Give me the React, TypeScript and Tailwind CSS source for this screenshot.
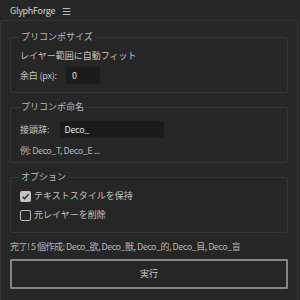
import React from "react";

const font = { fontFamily: '"Noto Sans CJK JP", "Noto Sans", sans-serif' };

function Check({ checked }: { checked: boolean }) {
  return checked ? (
    <span className="flex h-[11px] w-[11px] items-center justify-center rounded-[2px] bg-[#c4c4c4]">
      <svg width="9" height="9" viewBox="0 0 10 10">
        <path d="M1.8 5.2 L4 7.4 L8.3 2.4" fill="none" stroke="#2a2a2a" strokeWidth="1.6" />
      </svg>
    </span>
  ) : (
    <span className="h-[11px] w-[11px] rounded-[2px] border-[1.5px] border-[#b8b8b8]" />
  );
}

export default function App() {
  return (
    <div className="h-[300px] w-[300px] overflow-hidden bg-[#262626] text-[9px] leading-[12px] text-[#c4c4c4]" style={font}>
      <div className="flex h-[20px] items-center gap-[7px] pl-[10px] pt-[2px] text-[#d2d2d2]">
        <span className="tracking-[-0.3px]">GlyphForge</span>
        <span className="text-[10px] leading-none text-[#bbb]">☰</span>
      </div>
      <div className="h-[300px] w-[298px] rounded-[2px] border border-[#343434] px-[9px] pt-[10px]">
        <fieldset className="rounded-[2px] border border-[#353535] px-[9px] pb-[8px]">
          <legend className="px-[1px] text-[#bdbdbd]">プリコンポサイズ</legend>
          <div className="mt-[7px]">レイヤー範囲に自動フィット</div>
          <div className="mt-[5px] flex items-center gap-[9px]">
            <span className="tracking-[-0.2px]">余白 (px):</span>
            <div className="flex h-[17px] w-[34px] items-center rounded-[2px] bg-[#1b1b1b] pl-[6px] text-[#e0e0e0]">0</div>
          </div>
        </fieldset>
        <fieldset className="mt-[8px] rounded-[2px] border border-[#353535] px-[9px] pb-[5px]">
          <legend className="px-[1px] text-[#bdbdbd]">プリコンポ命名</legend>
          <div className="mt-[8px] flex items-center gap-[10px]">
            <span>接頭辞:</span>
            <div className="flex h-[17px] w-[104px] items-center rounded-[2px] bg-[#1b1b1b] pl-[5px] text-[#e0e0e0] tracking-[-0.3px]">Deco_</div>
          </div>
          <div className="mt-[7px] tracking-[-0.45px] text-[#b4b4b4]">例: Deco_T, Deco_E ...</div>
        </fieldset>
        <fieldset className="mt-[8px] rounded-[2px] border border-[#353535] px-[9px] pb-[11px]">
          <legend className="px-[1px] text-[#bdbdbd]">オプション</legend>
          <div className="mt-[7px] flex h-[12px] items-center gap-[3px]">
            <Check checked />
            <span>テキストスタイルを保持</span>
          </div>
          <div className="mt-[7px] flex h-[12px] items-center gap-[3px]">
            <Check checked={false} />
            <span>元レイヤーを削除</span>
          </div>
        </fieldset>
        <div className="mt-[8px] tracking-[-0.5px] text-[#b4b4b4]">完了! 5 個作成: Deco_欲, Deco_獣, Deco_的, Deco_目, Deco_盲</div>
        <button className="mt-[6px] flex h-[30px] w-full items-center justify-center rounded-[1px] border-2 border-[#858585] bg-[#262626] text-[9px] text-[#c8c8c8]">
          実行
        </button>
      </div>
    </div>
  );
}
